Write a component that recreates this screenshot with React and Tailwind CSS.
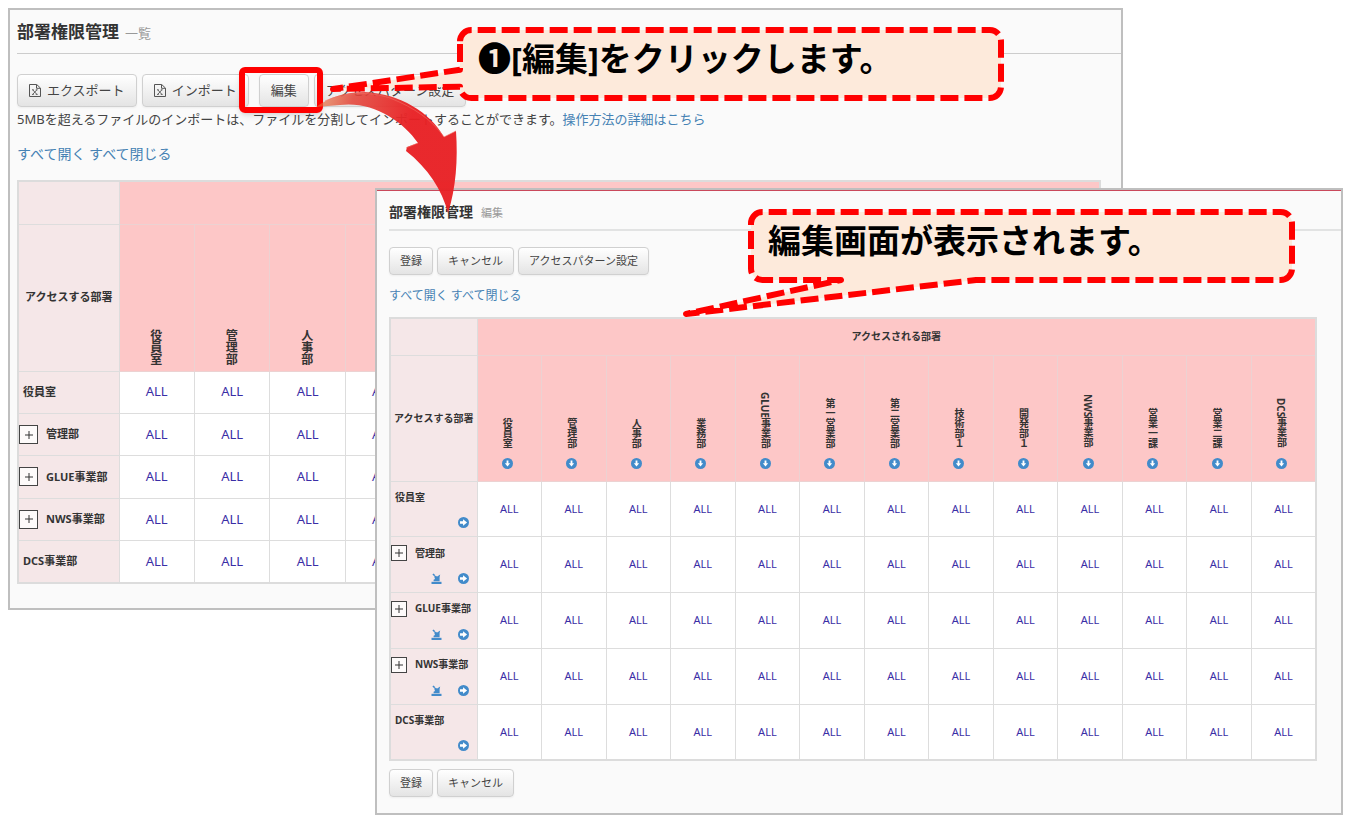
import React from "react";
import clsx from "clsx";

const columns = [
  "役員室",
  "管理部",
  "人事部",
  "業務部",
  "GLUE事業部",
  "第一営業部",
  "第二営業部",
  "技術部１",
  "開発部１",
  "NWS事業部",
  "営業一課",
  "営業二課",
  "DCS事業部",
];

const rows = [
  { name: "役員室", expandable: false },
  { name: "管理部", expandable: true },
  { name: "GLUE事業部", expandable: true },
  { name: "NWS事業部", expandable: true },
  { name: "DCS事業部", expandable: false },
];

const ExcelIcon = () => (
  <svg className="h-[13px] w-3 shrink-0" viewBox="0 0 12 13" fill="none" stroke="#555" aria-hidden="true">
    <path d="M.5.5h7.2l3.8 3.6v8.4H.5z" />
    <path d="M7.5.7v3.6h3.8" />
    <path d="M3.8 5.9l4 4.4M7.8 5.9l-4 4.4M3 5.8h1.8M6.8 5.8h1.8M3 10.4h1.8M6.8 10.4h1.8" strokeWidth=".9" />
  </svg>
);

// Flecha blanca dentro de un círculo azul
const CircleArrow = ({ down }) => (
  <svg className="h-[11px] w-[11px]" viewBox="0 0 12 12" aria-hidden="true">
    <circle cx="6" cy="6" r="6" fill="#428bca" />
    <path
      fill="#fff"
      d={down ? "M5 2.6h2v3.2h1.9L6 9.2 3.1 5.8H5z" : "M2.2 4.7v2.6h3.3v2.2L9.9 6 5.5 2.5v2.2z"}
    />
  </svg>
);

const CopyDownIcon = () => (
  <svg className="h-[11px] w-[11px]" viewBox="0 0 11 11" fill="#428bca" aria-hidden="true">
    <path d="M.5 8.8h10V11H.5z" />
    <path d="M1.4 1.4L2.6.4l1.7 1.8-1.1 1z" />
    <path d="M2.6 8.2V6.8l1.4-.8-.8-2.6 1-.6 2 .8 3-2.2-.6 2.6V8.2z" />
  </svg>
);

const Button = ({ small, icon, children }) => (
  <button
    type="button"
    className={clsx(
      "flex shrink-0 items-center whitespace-nowrap rounded border border-[#d0d0d0] bg-linear-to-b from-white to-[#e4e4e4] text-[#444] shadow-xs",
      small ? "h-7 px-[10px] text-[11px]" : "h-[33px] gap-[6px] px-[11px] text-[13px]"
    )}
  >
    {icon && <ExcelIcon />}
    {children}
  </button>
);

const PageTitle = ({ small, title, sub }) => (
  <h1 className={clsx("font-bold text-[#333]", small ? "text-[14px] leading-5" : "text-[17px] leading-6")}>
    {title}
    <span className={clsx("font-normal text-[#999]", small ? "ml-2 text-[11px]" : "ml-[6px] text-[13px]")}>
      {sub}
    </span>
  </h1>
);

const ToggleLinks = () => (
  <>
    <a href="#open">すべて開く</a> <a href="#close">すべて閉じる</a>
  </>
);

const PlusBox = ({ small, name }) => (
  <button
    type="button"
    aria-label={`${name}を開く`}
    className={clsx(
      "flex shrink-0 items-center justify-center border border-[#444] bg-[#fdfafa]",
      small ? "h-4 w-4" : "h-[19px] w-[19px]"
    )}
  >
    <svg className="h-2 w-2" viewBox="0 0 8 8" stroke="#333" aria-hidden="true">
      <path d="M4 0v8M0 4h8" />
    </svg>
  </button>
);

// filled: número de columnas que llevan texto
const PermissionTable = ({ edit, filled = columns.length }) => (
  <table
    className={clsx(
      "w-full table-fixed border-collapse border-2 border-[#dcdcdc] text-[#333]",
      edit ? "h-[444px] text-[10px]" : "h-[404px] text-[11px]"
    )}
  >
    <colgroup>
      <col className={edit ? "w-[87px]" : "w-[101px]"} />
      {columns.map((name) => (
        <col key={name} />
      ))}
    </colgroup>
    <thead>
      <tr className={edit ? "h-[37px]" : "h-[43px]"}>
        <td className="border border-[#ddd] bg-[#f5e7e8]" />
        <th colSpan={columns.length} className="border border-[#ecd2d2] bg-[#fdc7c7] font-bold">
          {edit && "アクセスされる部署"}
        </th>
      </tr>
      <tr className={edit ? "h-[126px]" : "h-[147px]"}>
        <th className="whitespace-nowrap border border-[#ddd] bg-[#f5e7e8] px-0 text-center font-bold">
          アクセスする部署
        </th>
        {columns.map((name, i) => (
          <th
            key={name}
            scope="col"
            className={clsx(
              "border border-[#ecd2d2] bg-[#fdc7c7] pr-1 align-bottom font-bold",
              edit ? "pb-3" : "pb-[6px] text-[12px]"
            )}
          >
            <div className="flex flex-col items-center gap-[10px]">
              {i < filled && <span className="leading-4 [writing-mode:vertical-rl]">{name}</span>}
              {edit && <CircleArrow down />}
            </div>
          </th>
        ))}
      </tr>
    </thead>
    <tbody>
      {rows.map(({ name, expandable }) => (
        <tr key={name} className={edit ? "h-[55px]" : "h-[42px]"}>
          <th scope="row" className="border border-[#ddd] bg-[#f5e7e8] text-left font-bold">
            <div className={clsx("flex items-center gap-2", edit && "h-4", !expandable && "pl-1")}>
              {expandable && <PlusBox small={edit} name={name} />}
              <span className="whitespace-nowrap">{name}</span>
            </div>
            {edit && (
              <div className="mt-3 flex justify-end gap-4 pr-2">
                {expandable && <CopyDownIcon />}
                <CircleArrow />
              </div>
            )}
          </th>
          {columns.map((col, i) => (
            <td
              key={col}
              className={clsx(
                "border border-[#ddd] bg-white text-center text-[#3a2ea6]",
                edit ? "text-[11px]" : "text-[13px]"
              )}
            >
              {i < filled && "ALL"}
            </td>
          ))}
        </tr>
      ))}
    </tbody>
  </table>
);

const ListWindow = () => (
  <section className="col-start-1 row-start-1 mt-2 mr-[231px] ml-2 self-start border-2 border-[#bfbfbf] bg-[#fafafa] pt-[10px] pb-6 pl-[7px]">
    <PageTitle title="部署権限管理" sub="一覧" />
    <hr className="mt-2 border-[#ccc]" />
    <div className="mt-5 flex gap-[5px]">
      <Button icon>エクスポート</Button>
      <Button icon>インポート</Button>
      <span className="w-0" />
      <Button>編集</Button>
      <Button>アクセスパターン設定</Button>
    </div>
    <p className="mt-[2px] text-[13px] leading-5 text-[#444]">
      5MBを超えるファイルのインポートは、ファイルを分割してインポートすることができます。
      <a href="#help" className="text-[#4682b4]">操作方法の詳細はこちら</a>
    </p>
    <p className="mt-[15px] mb-4 text-[14px] leading-5 text-[#4682b4]">
      <ToggleLinks />
    </p>
    <div className="pr-5">
      <PermissionTable filled={4} />
    </div>
  </section>
);

const EditWindow = () => (
  <section className="z-10 col-start-1 row-start-1 mt-[188px] mr-[11px] ml-[375px] self-start border-2 border-[#bfbfbf] bg-[#fafafa]">
    <div className="border-t border-[#c9485b] pt-[11px] pb-4 pl-3">
      <PageTitle small title="部署権限管理" sub="編集" />
      <hr className="mt-[6px] border-t-2 border-[#e2e3e3]" />
      <div className="mt-4 flex gap-1">
        <Button small>登録</Button>
        <Button small>キャンセル</Button>
        <Button small>アクセスパターン設定</Button>
      </div>
      <p className="mt-[11px] mb-[11px] text-[12px] leading-5 text-[#4682b4]">
        <ToggleLinks />
      </p>
      <div className="pr-6">
        <PermissionTable edit />
      </div>
      <div className="mt-2 flex gap-1">
        <Button small>登録</Button>
        <Button small>キャンセル</Button>
      </div>
    </div>
  </section>
);

// Flecha roja que va del botón de edición a la segunda ventana
const RedArrow = () => (
  <svg className="absolute top-[85px] left-[315px] z-20 h-[130px] w-[145px]" viewBox="315 85 145 130" aria-hidden="true">
    <defs>
      <linearGradient id="arrow" x1="317" y1="104" x2="410" y2="125" gradientUnits="userSpaceOnUse">
        <stop offset="0" stopColor="#e8703a" stopOpacity=".6" />
        <stop offset=".35" stopColor="#e4463a" stopOpacity=".88" />
        <stop offset="1" stopColor="#e82024" stopOpacity=".96" />
      </linearGradient>
    </defs>
    <path
      fill="url(#arrow)"
      d="M316 107C330 97 345 92 365 92C400 94 430 112 444 137L456 131C458 160 456 188 448 213C442 190 428 168 406 151L407 147L418 143C402 120 372 101 340 105Q328 106 316 107Z"
    />
    <path fill="none" stroke="#f06a60" strokeOpacity=".6" d="M325 101C345 92 368 91 390 98C415 108 432 120 444 137L456 131M406 148L418 143" />
  </svg>
);

const calloutStroke = {
  fill: "#fdeadb",
  stroke: "#f00",
  strokeWidth: 6,
  strokeDasharray: "18 6",
  strokeLinejoin: "round",
};

export default function App() {
  return (
    <main className="relative grid bg-white pb-[10px] font-['Noto_Sans','Noto_Sans_CJK_JP',sans-serif]">
      <ListWindow />
      <EditWindow />

      <div className="absolute top-[67px] left-[239px] z-10 h-[46px] w-[84px] rounded-md border-[6px] border-[#f00] shadow-md" />

      {/* Globo 1 */}
      <div className="absolute top-[27px] left-[325px] z-20 h-[74px] w-[679px]">
        <svg className="absolute inset-0 h-full w-full" viewBox="325 27 679 74" aria-hidden="true">
          <path
            {...calloutStroke}
            d="M460 41.3A11.3 11.3 0 0 1 471.3 30H989.7A11.3 11.3 0 0 1 1001 41.3V86.7A11.3 11.3 0 0 1 989.7 98H471.3A11.3 11.3 0 0 1 460 86.7L333 89L460 69.7Z"
          />
        </svg>
        <p className="relative pt-2 pl-[153px] text-[33px] leading-12 font-bold text-black">❶[編集]をクリックします。</p>
      </div>

      <RedArrow />

      {/* Globo 2 */}
      <div className="absolute top-[209px] left-[682px] z-20 h-[110px] w-[613px]">
        <svg className="absolute inset-0 h-full w-full" viewBox="682 209 613 110" aria-hidden="true">
          <path
            {...calloutStroke}
            d="M751 223.3A11.3 11.3 0 0 1 762.3 212H1280.7A11.3 11.3 0 0 1 1292 223.3V268.7A11.3 11.3 0 0 1 1280.7 280H976L686 314L841 280H762.3A11.3 11.3 0 0 1 751 268.7Z"
          />
        </svg>
        <p className="relative pt-2 pl-[86px] text-[33px] leading-12 font-bold text-black">編集画面が表示されます。</p>
      </div>
    </main>
  );
}
